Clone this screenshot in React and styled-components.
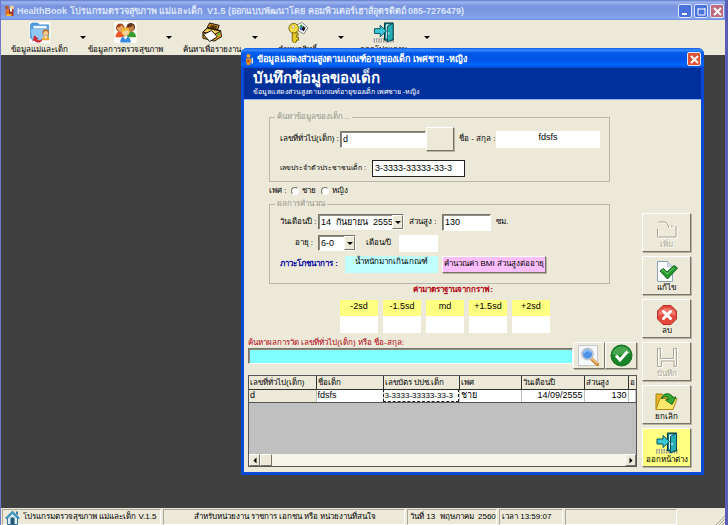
import React, { useState } from "react";
import styled, { createGlobalStyle } from "styled-components";

const colors = {
  face: "#ece9d8",
  desktop: "#404040",
  navy: "#00309c",
  cyan: "#7fffff",
  yellow: "#ffff80",
  red: "#b00010",
};

const raised = `
  border: 1px solid;
  border-color: #fff #77756a #77756a #fff;
  box-shadow: 1px 1px 0 #b5b2a2;
`;

const sunken = `
  border: 1px solid;
  border-color: #77756a #fff #fff #77756a;
  box-shadow: inset 1px 1px 0 #8f8d82;
`;

const GlobalStyle = createGlobalStyle`
  * { box-sizing: border-box; }
  body {
    margin: 0;
    font-family: "Liberation Sans", sans-serif;
    font-size: 8px;
    line-height: 12px;
    color: #000;
  }
  button, input, select { font: inherit; color: inherit; }
`;

const HomeIcon = () => (
  <svg width="15" height="15" viewBox="0 0 30 30">
    <path d="M5 15v14h20V15L15 5z" fill="#d9eef8" stroke="#37749b" strokeWidth="2" />
    <path d="M1 16L15 2l14 14-3 2L15 7 4 18z" fill="#3ba0cf" stroke="#186087" />
    <path d="M22 3h4v8l-4-4z" fill="#3e80a4" />
    <path d="M11 15h8v14h-8z" fill="#245777" />
  </svg>
);

const PersonIcon = () => (
  <svg width="9" height="11" viewBox="0 0 18 22">
    <circle cx="7" cy="4" r="4" fill="#f2a33a" />
    <path d="M2 9h10v6l-2 7H4l-2-7z" fill="#f08a1d" />
    <path d="M13 9l3-2v12h-3z" fill="#fff0cf" />
    <path d="M4 12h5v4H4z" fill="#b8590c" />
  </svg>
);

const AppIcon = () => (
  <svg width="11" height="12" viewBox="0 0 22 24">
    <circle cx="6" cy="5" r="4" fill="#b4552c" />
    <circle cx="16" cy="5" r="4" fill="#f1d397" />
    <path d="M3 9h8v12H3z" fill="#e56c20" />
    <path d="M10 8h9v14h-9z" fill="#a53a2c" />
    <path d="M12 7h4v6h-4z" fill="#fff" />
    <path d="M5 18h10v4H5z" fill="#efb72b" />
  </svg>
);

const FolderUserIcon = () => (
  <svg width="22" height="22" viewBox="0 0 44 44">
    <path d="M0 0h44v44H0z" fill="#fff" />
    <path d="M2 5l3-3h12l4 4h19v28H2z" fill="#4d9de0" stroke="#2671b8" />
    <path d="M8 8h28v18H8z" fill="#eef7ff" />
    <path d="M2 14h38l-3 23H5z" fill="#8fc8f4" stroke="#3e8bca" />
    <circle cx="34" cy="22" r="7" fill="#b8702a" />
    <circle cx="34" cy="24" r="5" fill="#f7c593" />
    <path d="M26 38c0-12 16-12 16 0z" fill="#f6ad35" />
    <path d="M31 30l3 5 3-5z" fill="#fff" />
    <path d="M10 28l9 7-4 1c3 3 8 3 12-1-1 9-11 11-17 4l-4 2z" fill="#cc2838" />
  </svg>
);

const PeopleIcon = () => (
  <svg width="23" height="22" viewBox="0 0 46 44">
    <path d="M0 0h46v44H0z" fill="#fff" />
    <path d="M2 32c0-16 20-16 20 0z" fill="#ea5426" />
    <path d="M25 32c0-16 20-16 20 0z" fill="#399b2e" />
    <circle cx="12" cy="12" r="9" fill="#a8481c" />
    <path d="M5 11c4 1 8-1 10-4 3 2 4 4 4 7 0 9-13 9-14-3z" fill="#e8a26b" />
    <circle cx="34" cy="11" r="9" fill="#5e331a" />
    <path d="M27 11c4 1 9-1 11-4 3 3 3 5 3 7-2 9-13 8-14-3z" fill="#c47b45" />
    <path d="M12 43c0-18 22-18 22 0z" fill="#358ade" />
    <path d="M18 30l5 7 5-7z" fill="#fff" />
    <circle cx="23" cy="20" r="9" fill="#efb52c" />
    <path d="M16 20c5 0 8-2 10-4 3 1 4 3 4 6-1 9-13 9-14-2z" fill="#f9d09c" />
  </svg>
);

const PrinterIcon = () => (
  <svg width="22" height="22" viewBox="0 0 44 44" stroke="#181000" strokeWidth="2">
    <path d="M12 11l5-9 20 5-4 11z" fill="#c98d20" />
    <path d="M17 12l3-6 13 3-3 7z" fill="#5a3a08" stroke="none" />
    <path d="M3 21l9-9 28 6 2 13-15 9-24-6z" fill="#d89b24" />
    <path d="M3 21l9-8 28 6-14 8z" fill="#f5cf60" />
    <path d="M4 26l17-8 12 13-16 10z" fill="#fff" />
    <path d="M34 27l5-3" stroke="#43d04b" strokeWidth="3" />
  </svg>
);

const KeyIcon = () => (
  <svg width="22" height="22" viewBox="0 0 44 44">
    <path d="M20 6l10-5 13 11-9 13-13-8z" fill="#fff" stroke="#777" strokeWidth="2" />
    <path d="M25 8l5-3 2 6-6 2z" fill="#1b9f52" />
    <path d="M32 8l6 4-4 8-4-4z" fill="#17171c" />
    <path d="M25 13l5-2 1 7-4-1z" fill="#4355cb" />
    <path d="M10 20h7v3h5v5h-3v4h4v6h-4v3l-4 3-5-4z" fill="#e7c928" stroke="#786300" strokeWidth="2" />
    <circle cx="13" cy="13" r="10" fill="#f7e04b" stroke="#786300" strokeWidth="2" />
    <circle cx="12" cy="10" r="3" fill="#fff" stroke="#786300" />
  </svg>
);

const ExitIcon = () => (
  <svg width="22" height="22" viewBox="0 0 44 44">
    <path d="M0 36h43M0 41h43" stroke="#999" strokeDasharray="3 2" strokeWidth="4" />
    <path d="M23 2h18v36H23z" fill="#07828b" stroke="#062e37" strokeWidth="2" />
    <path d="M26 5h10v30H26z" fill="#dbfbff" />
    <path d="M29 9l12-7v34l-12 6z" fill="#26aeb5" stroke="#074b55" strokeWidth="2" />
    <path d="M32 22v4" stroke="#fff" strokeWidth="2" />
    <path d="M2 14h12V7l13 12-13 12v-7H2z" fill="#38c8d6" stroke="#07515f" strokeWidth="2" />
  </svg>
);

const NewIcon = () => (
  <svg width="22" height="20" viewBox="0 0 44 40" fill="none" strokeWidth="2">
    <path d="M5 6h14l6 8v4M40 14v22H3V20M30 14h4" stroke="#fff" transform="translate(2 2)" />
    <path d="M5 6h14l6 8v4M40 14v22H3V20M30 14h4" stroke="#aaa797" />
  </svg>
);

const EditIcon = () => (
  <svg width="22" height="21" viewBox="0 0 44 42">
    <path d="M3 1h20l10 10v30H3z" fill="#fff" stroke="#8aa2ba" strokeWidth="2" />
    <path d="M23 1v10h10" fill="#d8e3ef" stroke="#8aa2ba" />
    <path d="M8 20l7-5 7 7 14-13 7 5-20 22z" fill="#279b32" stroke="#116018" strokeWidth="2" />
    <path d="M12 20l3-2 7 8 14-13" fill="none" stroke="#78cc68" strokeWidth="2" />
  </svg>
);

const DeleteIcon = () => (
  <svg width="20" height="20" viewBox="0 0 40 40">
    <path d="M12 1h16l11 11v16L28 39H12L1 28V12z" fill="#e5493e" stroke="#b42e28" strokeWidth="2" />
    <path d="M3 14C9 3 31 3 37 14v7C26 17 14 17 3 21z" fill="#ef7469" />
    <path d="M13 13l14 14m0-14L13 27" stroke="#fff" strokeWidth="6" strokeLinecap="round" />
  </svg>
);

const SaveIcon = () => (
  <svg width="22" height="21" viewBox="0 0 44 42" fill="none" strokeWidth="2">
    <path d="M3 3h6v20h26V3h6v36h-5V28H11v11H3z" stroke="#fff" transform="translate(2 2)" />
    <path d="M3 3h6v20h26V3h6v36h-5V28H11v11H3z" stroke="#aaa797" />
  </svg>
);

const CancelIcon = () => (
  <svg width="23" height="20" viewBox="0 0 46 40">
    <path d="M2 6h12l4 5h18v26H2z" fill="#e8b72d" stroke="#a7800f" strokeWidth="2" />
    <path d="M10 15h34l-8 22H2z" fill="#ffe66c" stroke="#b58b15" strokeWidth="2" />
    <path d="M13 16C14 4 31 1 36 13l6-1-8 15-13-9 7-2c-2-6-10-6-15 0z" fill="#35a735" stroke="#16701c" strokeWidth="2" />
  </svg>
);

const SearchIcon = () => (
  <svg width="22" height="22" viewBox="0 0 44 44">
    <path d="M1 1h38v40H1z" fill="#f7f8fc" stroke="#c5c8d0" strokeWidth="2" />
    <path d="M26 27l13 12" stroke="#c88c45" strokeWidth="7" strokeLinecap="round" />
    <path d="M26 26l13 11" stroke="#f1c478" strokeWidth="3" />
    <circle cx="19" cy="18" r="11" fill="#4c91e6" stroke="#bbc5d3" strokeWidth="4" />
    <path d="M12 17c1-7 11-8 13-2" fill="none" stroke="#8fc2fa" strokeWidth="3" />
  </svg>
);

const OkIcon = () => (
  <svg width="23" height="23" viewBox="0 0 46 46">
    <circle cx="23" cy="23" r="21" fill="#188327" stroke="#126b20" strokeWidth="2" />
    <path d="M4 20C8 0 38 0 42 20 30 16 16 27 4 20z" fill="#46a44d" />
    <path d="M12 23l8 9 15-17" fill="none" stroke="#fff" strokeWidth="6" />
  </svg>
);

const CloseGlyph = () => (
  <svg width="9" height="9" viewBox="0 0 9 9">
    <path d="M1 1l7 7M8 1L1 8" stroke="#fff" strokeWidth="2" />
  </svg>
);

const toolbarItems = [
  { label: "ข้อมูลแม่และเด็ก", icon: <FolderUserIcon /> },
  { label: "ข้อมูลการตรวจสุขภาพ", icon: <PeopleIcon /> },
  { label: "ค้นหาเพื่อรายงาน", icon: <PrinterIcon /> },
  { label: "กำหนดสิทธิ์", icon: <KeyIcon /> },
  { label: "ออกโปรแกรม", icon: <ExitIcon /> },
];

const actions = [
  { label: "เพิ่ม", icon: <NewIcon />, disabled: true },
  { label: "แก้ไข", icon: <EditIcon /> },
  { label: "ลบ", icon: <DeleteIcon /> },
  { label: "บันทึก", icon: <SaveIcon />, disabled: true },
  { label: "ยกเลิก", icon: <CancelIcon /> },
  { label: "ออกหน้าต่าง", icon: <ExitIcon />, highlight: true },
];

const deviations = ["-2sd", "-1.5sd", "md", "+1.5sd", "+2sd"];

const Combo = ({ id, value, width }) => (
  <ComboBox $width={width}>
    <select id={id} defaultValue={value}>
      <option>{value}</option>
    </select>
    <ComboArrow>
      <Caret />
    </ComboArrow>
  </ComboBox>
);

const RecordDialog = () => {
  const [code, setCode] = useState("d");
  const [citizenId, setCitizenId] = useState("3-3333-33333-33-3");
  const [height, setHeight] = useState("130");
  const [query, setQuery] = useState("");

  return (
    <Dialog>
      <DialogTitle>
        <PersonIcon />
        <DialogName>ข้อมูลแสดงส่วนสูงตามเกณฑ์อายุของเด็ก เพศชาย -หญิง</DialogName>
        <WindowButton $color="#dd5230" aria-label="Close"><CloseGlyph /></WindowButton>
      </DialogTitle>
      <Banner>
        <h1>บันทึกข้อมูลของเด็ก</h1>
        <p>ข้อมูลแสดงส่วนสูงตามเกณฑ์อายุของเด็ก เพศชาย -หญิง</p>
      </Banner>
      <DialogBody>
        <Main>
          <Group>
            <legend>ค้นหาข้อมูลของเด็ก...</legend>
            <Row $height={28}>
              <Label htmlFor="code" $width={60}>เลขที่ทั่วไป(เด็ก) :</Label>
              <TextBox id="code" $width={86} value={code} onChange={(e) => setCode(e.target.value)} />
              <PickButton aria-label="..." />
              <Label as="span" $width={42} $indent={5}>ชื่อ - สกุล :</Label>
              <Output $width={104} $size={9}>fdsfs</Output>
            </Row>
            <Row $height={26}>
              <Label htmlFor="citizen" $width={92} $small>เลขประจำตัวประชาชนเด็ก :</Label>
              <TextBox id="citizen" $flat $width={93} value={citizenId} onChange={(e) => setCitizenId(e.target.value)} />
            </Row>
          </Group>
          <Genders>
            <span>เพศ :</span>
            <label><Radio name="gender" />ชาย</label>
            <label><Radio name="gender" />หญิง</label>
          </Genders>
          <Group $bottom={9}>
            <legend>ผลการคำนวณ</legend>
            <Row $height={20}>
              <Label htmlFor="date" $width={38}>วันเดือนปี :</Label>
              <Combo id="date" value={"14\u00a0 กันยายน \u00a02555"} width={86} />
              <Label htmlFor="height" $width={38} $indent={5}>ส่วนสูง :</Label>
              <TextBox id="height" $width={49} value={height} onChange={(e) => setHeight(e.target.value)} />
              <Label as="span" $width={20} $indent={5}>ซม.</Label>
            </Row>
            <Row $height={18}>
              <Label htmlFor="age" $width={38} $right>อายุ :</Label>
              <Combo id="age" value="6-0" width={38} />
              <Label as="span" $width={43} $indent={10}>เดือน/ปี</Label>
              <Output $width={39} />
            </Row>
            <Row $height={20}>
              <Status>ภาวะโภชนาการ :</Status>
              <Output $width={93} $color="#bfffff">น้ำหนักมากเกินเกณฑ์</Output>
              <BmiButton>คำนวณค่า BMI ส่วนสูงต่ออายุ</BmiButton>
            </Row>
          </Group>
          <ChartTitle>ค่ามาตราฐานจากกราฟ:</ChartTitle>
          <Deviations>
            {deviations.map((name) => (
              <Deviation key={name}>
                <dt>{name}</dt>
                <dd />
              </Deviation>
            ))}
          </Deviations>
          <SearchLabel htmlFor="query">ค้นหาผลการวัด เลขที่ทั่วไป(เด็ก) หรือ ชื่อ-สกุล:</SearchLabel>
          <SearchRow>
            <SearchBox id="query" value={query} onChange={(e) => setQuery(e.target.value)} />
            <SearchButton aria-label="Search"><SearchIcon /></SearchButton>
            <SearchButton aria-label="OK"><OkIcon /></SearchButton>
          </SearchRow>
          <Grid>
            <Table>
              <colgroup>
                <col width="67" /><col width="67" /><col width="76" /><col width="62" />
                <col width="63" /><col width="44" /><col />
              </colgroup>
              <thead>
                <tr>
                  <th>เลขที่ทั่วไป(เด็ก)</th>
                  <th>ชื่อเด็ก</th>
                  <th>เลขบัตร ปปช.เด็ก</th>
                  <th>เพศ</th>
                  <th>วันเดือนปี</th>
                  <th>ส่วนสูง</th>
                  <th>อ</th>
                </tr>
              </thead>
              <tbody>
                <tr>
                  <Cell $fixed>d</Cell>
                  <Cell>fdsfs</Cell>
                  <Cell $focus>3-3333-33333-33-3</Cell>
                  <Cell>ชาย</Cell>
                  <Cell $right>14/09/2555</Cell>
                  <Cell $right>130</Cell>
                  <Cell />
                </tr>
              </tbody>
            </Table>
            <ScrollBar>
              <ScrollButton aria-label="Left"><Caret $turn={90} /></ScrollButton>
              <Thumb />
              <ScrollButton aria-label="Right"><Caret $turn={-90} /></ScrollButton>
            </ScrollBar>
          </Grid>
        </Main>
        <Actions>
          {actions.map(({ label, icon, disabled, highlight }) => (
            <ActionButton key={label} disabled={disabled} $highlight={highlight}>
              {icon}
              {label}
            </ActionButton>
          ))}
        </Actions>
      </DialogBody>
    </Dialog>
  );
};

const App = () => (
  <Window>
    <GlobalStyle />
    <TitleBar>
      <AppIcon />
      <Title>HealthBook โปรแกรมตรวจสุขภาพ แม่และเด็ก&nbsp; V1.5 (ออกแบบพัฒนาโดย คอมพิวเตอร์เฮาส์อุตรดิตถ์ 085-7276479)</Title>
      <WindowButton $color="#4b72dc" aria-label="Minimize">
        <svg width="9" height="9"><path d="M1 7h5" stroke="#fff" strokeWidth="2" /></svg>
      </WindowButton>
      <WindowButton $color="#4b72dc" aria-label="Maximize">
        <svg width="9" height="9"><path d="M1 2h7M1 1v7h7V1" fill="none" stroke="#fff" /></svg>
      </WindowButton>
      <WindowButton $color="#bd6b7c" aria-label="Close"><CloseGlyph /></WindowButton>
    </TitleBar>
    <Toolbar>
      {toolbarItems.map(({ label, icon }) => (
        <React.Fragment key={label}>
          <ToolButton>{icon}{label}</ToolButton>
          <ToolMenu aria-label="Menu"><Caret /></ToolMenu>
        </React.Fragment>
      ))}
    </Toolbar>
    <Desktop />
    <StatusBar>
      <Pane $width={159}><HomeIcon />โปรแกรมตรวจสุขภาพ แม่และเด็ก V.1.5</Pane>
      <Pane $width={242} $center>สำหรับหน่วยงาน ราชการ เอกชน หรือ หน่วยงานที่สนใจ</Pane>
      <Pane $width={90}>วันที่ 13&nbsp; พฤษภาคม&nbsp; 2560</Pane>
      <Pane $width={64}>เวลา 13:59:07</Pane>
      <Pane $width={112} />
      <Grip width="10" height="10"><path d="M1 10l9-9M4 10l6-6M7 10l3-3" stroke="#aaa797" /></Grip>
    </StatusBar>
    <RecordDialog />
  </Window>
);

const Window = styled.div`
  position: relative;
  min-height: 100vh;
  display: flex;
  flex-direction: column;
  background: ${colors.desktop};
  border-left: 1px solid #6d79c9;
  border-right: 3px solid #5a5eb4;
`;

const TitleBar = styled.header`
  height: 20px;
  display: flex;
  align-items: center;
  gap: 2px;
  padding: 2px 1px 0 3px;
  background: linear-gradient(#5f79ca, #9db5f0 2px, #7a93df 6px, #7d9ae4 14px, #86a7ef 18px, #6f89d6);
`;

const Title = styled.div`
  flex: 1;
  color: #dbe5fb;
  font-size: 9px;
  font-weight: bold;
  white-space: nowrap;
`;

const WindowButton = styled.button`
  width: 14px;
  height: 14px;
  flex: none;
  display: flex;
  align-items: center;
  justify-content: center;
  padding: 0;
  border: 1px solid #dce5fb;
  border-radius: 2px;
  background: ${(props) => props.$color};
`;

const Toolbar = styled.nav`
  height: 35px;
  display: flex;
  background: ${colors.face};
`;

const ToolButton = styled.button`
  width: 77px;
  display: flex;
  flex-direction: column;
  align-items: center;
  gap: 2px;
  padding: 2px 0 0;
  border: 0;
  background: none;
  white-space: nowrap;
  line-height: 10px;
`;

const ToolMenu = styled.button`
  width: 9px;
  display: flex;
  align-items: center;
  justify-content: center;
  padding: 0;
  border: 0;
  background: none;
`;

const Caret = styled.i`
  border: 3px solid transparent;
  border-top-color: #000;
  border-bottom: 0;
  transform: rotate(${(props) => props.$turn || 0}deg);
`;

const Desktop = styled.main`
  flex: 1;
`;

const StatusBar = styled.footer`
  height: 17px;
  display: flex;
  gap: 2px;
  padding: 1px 0 0 1px;
  background: ${colors.face};
`;

const Pane = styled.div`
  width: ${(props) => props.$width}px;
  display: flex;
  align-items: center;
  justify-content: ${(props) => (props.$center ? "center" : "flex-start")};
  gap: 3px;
  padding-left: 2px;
  border: 1px solid;
  border-color: #aca899 #fff #fff #aca899;
  white-space: nowrap;
`;

const Grip = styled.svg`
  margin: auto 0 0 auto;
`;

const Dialog = styled.section`
  position: absolute;
  top: 48px;
  left: 240px;
  right: 21px;
  border: 3px solid #0a48d8;
  border-top: 0;
  border-radius: 6px 6px 0 0;
  background: ${colors.face};
`;

const DialogTitle = styled.header`
  height: 20px;
  display: flex;
  align-items: center;
  gap: 3px;
  margin: 0 -3px;
  padding: 2px 3px 0 4px;
  border-radius: 6px 6px 0 0;
  background: linear-gradient(#0a58e0, #3a8bff 2px, #0058ea 5px, #0055e5 12px, #0066ff 17px, #0048d0);
`;

const DialogName = styled.div`
  flex: 1;
  color: #fff;
  font-size: 9px;
  font-weight: bold;
  white-space: nowrap;
`;

const Banner = styled.div`
  height: 32px;
  padding: 1px 0 0 9px;
  border-bottom: 1px solid #8fb0ec;
  background: ${colors.navy};
  color: #fff;
  h1 {
    margin: 0;
    font-size: 15px;
    line-height: 18px;
  }
  p {
    margin: 0;
    font-size: 7px;
    line-height: 10px;
  }
`;

const DialogBody = styled.div`
  display: flex;
  gap: 5px;
  padding: 11px 10px 5px 4px;
`;

const Main = styled.div`
  flex: 1;
  min-width: 0;
`;

const Group = styled.fieldset`
  display: flex;
  flex-direction: column;
  gap: 2px;
  margin: 0 27px 0 21px;
  padding: 2px 9px ${(props) => props.$bottom || 0}px 10px;
  border: 1px solid #b8b6aa;
  legend {
    height: 12px;
    margin-left: -5px;
    padding: 0 2px;
    color: #98968a;
    font-size: 8px;
  }
`;

const Row = styled.div`
  height: ${(props) => props.$height}px;
  display: flex;
  align-items: center;
`;

const Label = styled.label`
  width: ${(props) => props.$width}px;
  flex: none;
  padding-left: ${(props) => props.$indent || 0}px;
  padding-right: ${(props) => (props.$right ? 5 : 0)}px;
  font-size: ${(props) => (props.$small ? 7 : 8)}px;
  text-align: ${(props) => (props.$right ? "right" : "left")};
  white-space: nowrap;
`;

const TextBox = styled.input`
  width: ${(props) => props.$width}px;
  height: 17px;
  padding: 0 2px;
  border-radius: 0;
  background: #fff;
  font-size: 9px;
  ${sunken}
  ${(props) => props.$flat && "border-color: #222; box-shadow: none;"}
`;

const PickButton = styled.button`
  width: 28px;
  height: 24px;
  background: ${colors.face};
  ${raised}
`;

const Output = styled.output`
  width: ${(props) => props.$width}px;
  height: 17px;
  background: ${(props) => props.$color || "#fff"};
  font-size: ${(props) => props.$size || 8}px;
  text-align: center;
  white-space: nowrap;
`;

const Genders = styled.div`
  height: 16px;
  display: flex;
  align-items: center;
  gap: 5px;
  padding: 2px 0 0 21px;
  label {
    display: flex;
    align-items: center;
    gap: 3px;
  }
`;

const Radio = styled.input.attrs({ type: "radio" })`
  appearance: none;
  width: 8px;
  height: 8px;
  margin: 0;
  border: 1px solid;
  border-color: #77756a #fff #fff #77756a;
  border-radius: 50%;
  background: #fff;
`;

const ComboBox = styled.div`
  width: ${(props) => props.$width}px;
  height: 16px;
  display: flex;
  background: #fff;
  ${sunken}
  select {
    appearance: none;
    flex: 1;
    min-width: 0;
    padding: 0 0 0 2px;
    border: 0;
    background: none;
    font-size: 9px;
  }
`;

const ComboArrow = styled.span`
  width: 11px;
  display: flex;
  align-items: center;
  justify-content: center;
  background: ${colors.face};
  border: 1px solid;
  border-color: #fff #77756a #77756a #fff;
  pointer-events: none;
`;

const Status = styled.strong`
  width: 65px;
  color: #0000a0;
  font-size: 8px;
  white-space: nowrap;
`;

const BmiButton = styled.button`
  width: 104px;
  height: 17px;
  margin-left: 4px;
  padding: 0;
  background: #ffbfff;
  white-space: nowrap;
  ${raised}
`;

const ChartTitle = styled.h2`
  margin: 0 0 4px 21px;
  color: ${colors.red};
  font-size: 8px;
  line-height: 12px;
  text-align: center;
`;

const Deviations = styled.dl`
  display: flex;
  gap: 5px;
  margin: 0 0 4px 92px;
`;

const Deviation = styled.div`
  width: 38px;
  dt {
    height: 16px;
    background: ${colors.yellow};
    font-size: 9px;
    text-align: center;
  }
  dd {
    height: 17px;
    margin: 0;
    background: #fff;
  }
`;

const SearchLabel = styled.label`
  display: block;
  height: 5px;
  color: ${colors.red};
  white-space: nowrap;
`;

const SearchRow = styled.div`
  display: flex;
  align-items: center;
`;

const SearchBox = styled.input`
  flex: 1;
  min-width: 0;
  height: 16px;
  background: ${colors.cyan};
  ${sunken}
`;

const SearchButton = styled.button`
  width: 32px;
  height: 27px;
  display: flex;
  align-items: center;
  justify-content: center;
  padding: 0;
  background: ${colors.face};
  ${raised}
`;

const Grid = styled.div`
  height: 92px;
  display: flex;
  flex-direction: column;
  justify-content: space-between;
  margin-top: 6px;
  border: 1px solid #555;
  background: #c0c0c0;
  overflow: hidden;
`;

const Table = styled.table`
  width: 100%;
  table-layout: fixed;
  border-collapse: collapse;
  th {
    height: 13px;
    padding: 0 1px;
    border-right: 1px solid #333;
    border-bottom: 1px solid #333;
    background: ${colors.face};
    font-weight: normal;
    line-height: 11px;
    text-align: left;
    white-space: nowrap;
  }
  th:last-child {
    border-right: 0;
  }
`;

const Cell = styled.td`
  height: 13px;
  padding: 0 1px;
  border-right: 1px solid #c0c0c0;
  border-bottom: 1px solid #555;
  background: ${(props) => (props.$fixed ? colors.face : "#fff")};
  outline: ${(props) => (props.$focus ? "1px dashed #222" : "none")};
  outline-offset: -1px;
  font-size: ${(props) => (props.$focus ? 8 : 9)}px;
  line-height: 11px;
  text-align: ${(props) => (props.$right ? "right" : "left")};
  white-space: nowrap;
`;

const ScrollBar = styled.div`
  height: 12px;
  display: flex;
  background: #f5f3ea;
`;

const ScrollButton = styled.button`
  width: 11px;
  display: flex;
  align-items: center;
  justify-content: center;
  padding: 0;
  background: ${colors.face};
  border: 1px solid;
  border-color: #fff #77756a #77756a #fff;
`;

const Thumb = styled.div`
  width: 12px;
  margin-right: auto;
  background: ${colors.face};
  border: 1px solid;
  border-color: #fff #77756a #77756a #fff;
`;

const Actions = styled.aside`
  display: flex;
  flex-direction: column;
  justify-content: flex-end;
  gap: 4px;
`;

const ActionButton = styled.button`
  width: 49px;
  height: 39px;
  display: flex;
  flex-direction: column;
  align-items: center;
  justify-content: flex-end;
  padding: 0;
  background: ${(props) => (props.$highlight ? colors.yellow : colors.face)};
  white-space: nowrap;
  ${raised}
  &:disabled {
    color: #aaa797;
    text-shadow: 1px 1px 0 #fff;
  }
`;

export default App;
